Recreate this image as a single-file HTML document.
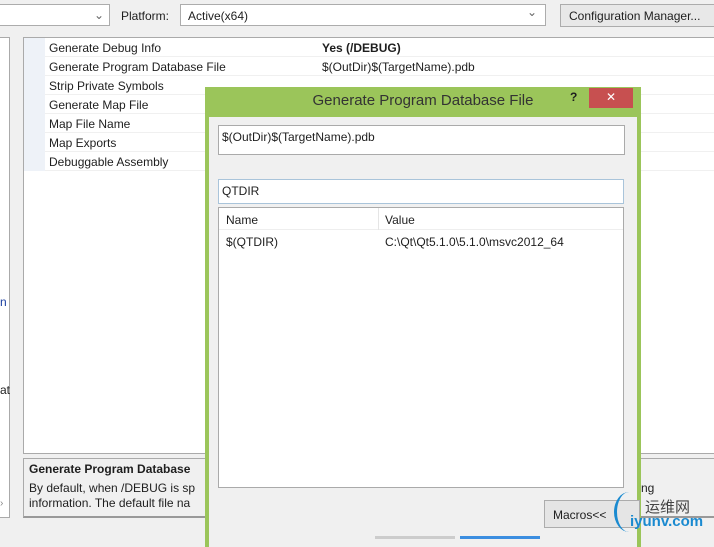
<!DOCTYPE html>
<html><head><style>
*{margin:0;padding:0;box-sizing:border-box}
body{width:714px;height:539px;overflow:hidden;background:#f0f0f0;font-family:"Liberation Sans","Noto Sans CJK SC",sans-serif;font-size:12px;color:#1e1e1e;position:relative}
.a{position:absolute}
.row{position:absolute;left:45px;width:669px;height:19px;border-bottom:1px solid #f0f0f0}
.row span{position:absolute;left:4px;top:3px}
.row b,.row i{position:absolute;left:277px;top:3px;font-style:normal}
</style></head><body>
<div class="a" style="left:-2px;top:4px;width:112px;height:22px;border:1px solid #acacac;background:#fff"></div>
<div class="a" style="left:94px;top:8px;color:#666">&#8964;</div>
<div class="a" style="left:121px;top:9px">Platform:</div>
<div class="a" style="left:180px;top:4px;width:366px;height:22px;border:1px solid #acacac;background:#fff"><span style="position:absolute;left:7px;top:4px">Active(x64)</span><span style="position:absolute;right:8px;top:0px;color:#666">&#8964;</span></div>
<div class="a" style="left:560px;top:4px;width:160px;height:23px;border:1px solid #acacac;background:#e8e8e8"><span style="position:absolute;left:8px;top:4px">Configuration Manager...</span></div>
<div class="a" style="left:-2px;top:37px;width:12px;height:481px;border:1px solid #aaa;background:#fff"></div>
<div class="a" style="left:0;top:295px;color:#1a3ea0">n</div>
<div class="a" style="left:0;top:383px">at</div>
<div class="a" style="left:23px;top:37px;width:692px;height:417px;border:1px solid #aaa;background:#fff"></div>
<div class="a" style="left:24px;top:38px;width:21px;height:133px;background:#eef2f8"></div>
<div class="row" style="top:38px"><span>Generate Debug Info</span><b>Yes (/DEBUG)</b></div>
<div class="row" style="top:57px"><span>Generate Program Database File</span><i>$(OutDir)$(TargetName).pdb</i><div style="position:absolute;left:0;top:0;width:273px;height:18px;background:#f0f4fa;z-index:-1"></div></div>
<div class="row" style="top:76px"><span>Strip Private Symbols</span></div>
<div class="row" style="top:95px"><span>Generate Map File</span></div>
<div class="row" style="top:114px"><span>Map File Name</span></div>
<div class="row" style="top:133px"><span>Map Exports</span></div>
<div class="row" style="top:152px"><span>Debuggable Assembly</span></div>
<div class="a" style="left:23px;top:458px;width:692px;height:60px;border:1px solid #aaa;border-bottom:2px solid #999;background:#f0f0f0">
<div style="position:absolute;left:5px;top:3px;font-weight:bold">Generate Program Database</div>
<div style="position:absolute;left:5px;top:22px">By default, when /DEBUG is sp</div>
<div style="position:absolute;left:5px;top:37px">information. The default file na</div>
<div style="position:absolute;left:617px;top:22px">ng</div>
</div>
<div class="a" style="left:0;top:498px;color:#888;font-size:10px">&#8250;</div>
<!-- dialog -->
<div class="a" style="left:205px;top:87px;width:436px;height:460px;background:#9bc55a"></div>
<div class="a" style="left:209px;top:117px;width:428px;height:430px;background:#f0f0f0"></div>
<div class="a" style="left:205px;top:92px;width:436px;text-align:center;font-size:15px;color:#333">Generate Program Database File</div>
<div class="a" style="left:570px;top:90px;font-weight:bold;font-size:12px">?</div>
<div class="a" style="left:589px;top:88px;width:44px;height:20px;background:#c75050;color:#fff;text-align:center;font-size:12px;line-height:19px">✕</div>
<div class="a" style="left:218px;top:125px;width:407px;height:30px;border:1px solid #aaa;background:#fff"><span style="position:absolute;left:3px;top:4px">$(OutDir)$(TargetName).pdb</span></div>
<div class="a" style="left:218px;top:179px;width:406px;height:25px;border:1px solid #a9c4da;background:#fff"><span style="position:absolute;left:3px;top:4px">QTDIR</span></div>
<div class="a" style="left:218px;top:207px;width:406px;height:281px;border:1px solid #aaa;background:#fff">
<div style="position:absolute;left:0;top:0;width:404px;height:22px;border-bottom:1px solid #eee"></div>
<div style="position:absolute;left:159px;top:0;width:1px;height:22px;background:#e5e5e5"></div>
<span style="position:absolute;left:7px;top:5px">Name</span><span style="position:absolute;left:166px;top:5px">Value</span>
<span style="position:absolute;left:7px;top:27px">$(QTDIR)</span><span style="position:absolute;left:166px;top:27px">C:\Qt\Qt5.1.0\5.1.0\msvc2012_64</span>
</div>
<div class="a" style="left:544px;top:500px;width:96px;height:28px;border:1px solid #acacac;background:#e5e5e5"><span style="position:absolute;left:8px;top:7px">Macros&lt;&lt;</span></div>
<div class="a" style="left:375px;top:536px;width:80px;height:3px;background:#ccc"></div>
<div class="a" style="left:460px;top:536px;width:80px;height:3px;background:#3c8ee0"></div>
<div class="a" style="left:645px;top:496px;font-size:15px;color:#444">运维网</div>
<div class="a" style="left:630px;top:513px;font-size:15px;font-weight:bold;color:#1a8ad0">iyunv.com</div>
<div class="a" style="left:614px;top:492px;width:30px;height:40px;border-left:3px solid #1a8ad0;border-radius:50%"></div>
</body></html>
